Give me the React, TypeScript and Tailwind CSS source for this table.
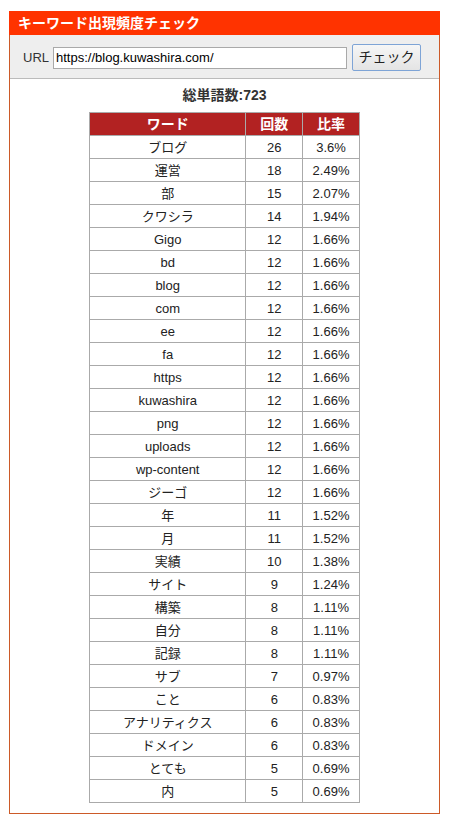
import React from "react";

const rows: [string, number, string][] = [
  ["ブログ", 26, "3.6%"],
  ["運営", 18, "2.49%"],
  ["部", 15, "2.07%"],
  ["クワシラ", 14, "1.94%"],
  ["Gigo", 12, "1.66%"],
  ["bd", 12, "1.66%"],
  ["blog", 12, "1.66%"],
  ["com", 12, "1.66%"],
  ["ee", 12, "1.66%"],
  ["fa", 12, "1.66%"],
  ["https", 12, "1.66%"],
  ["kuwashira", 12, "1.66%"],
  ["png", 12, "1.66%"],
  ["uploads", 12, "1.66%"],
  ["wp-content", 12, "1.66%"],
  ["ジーゴ", 12, "1.66%"],
  ["年", 11, "1.52%"],
  ["月", 11, "1.52%"],
  ["実績", 10, "1.38%"],
  ["サイト", 9, "1.24%"],
  ["構築", 8, "1.11%"],
  ["自分", 8, "1.11%"],
  ["記録", 8, "1.11%"],
  ["サブ", 7, "0.97%"],
  ["こと", 6, "0.83%"],
  ["アナリティクス", 6, "0.83%"],
  ["ドメイン", 6, "0.83%"],
  ["とても", 5, "0.69%"],
  ["内", 5, "0.69%"],
];

export default function App() {
  return (
    <div
      className="w-[451px] h-[829px] bg-white pl-[9px] pt-[11px]"
      style={{ fontFamily: '"Liberation Sans", "Noto Sans CJK JP", sans-serif' }}
    >
      <div className="w-[431px] h-[803px] border border-[#cc5a28] border-t-0 flex flex-col">
        <div className="h-[24px] bg-[#ff3300] text-white font-bold text-[14px] leading-[24px] pl-[9px] -mx-px">
          キーワード出現頻度チェック
        </div>
        <div className="h-[44px] bg-[#eeeeee] border-b border-[#bbbbbb] flex items-center pl-[13px] pt-[2px]">
          <span className="text-[13px] text-[#333] mr-[4px]">URL</span>
          <div className="w-[294px] h-[22px] border border-[#a9a9a9] bg-white text-[13px] leading-[20px] pl-[2px] text-black">
            https://blog.kuwashira.com/
          </div>
          <div className="ml-[5px] w-[69px] h-[27px] border border-[#7ea4d6] rounded-[2px] bg-gradient-to-b from-[#f6f6f6] to-[#e4e4e4] text-[14px] text-[#222] flex items-center justify-center">
            チェック
          </div>
        </div>
        <div className="flex flex-col items-center pt-[7px]">
          <div className="text-[14px] font-bold text-[#333] leading-[18px] h-[26px]">総単語数:723</div>
          <table className="border-collapse w-[271px] text-[13px] text-[#222]">
            <thead>
              <tr className="h-[23px] bg-[#b22222] text-white text-[14px]">
                <th className="border border-[#aaaaaa] w-[157px] font-bold">ワード</th>
                <th className="border border-[#aaaaaa] w-[57px] font-bold">回数</th>
                <th className="border border-[#aaaaaa] w-[57px] font-bold">比率</th>
              </tr>
            </thead>
            <tbody>
              {rows.map(([w, c, r]) => (
                <tr key={w} className="h-[23px]">
                  <td className="border border-[#aaaaaa] text-center p-0 leading-[21px]">{w}</td>
                  <td className="border border-[#aaaaaa] text-center p-0 leading-[21px]">{c}</td>
                  <td className="border border-[#aaaaaa] text-center p-0 leading-[21px]">{r}</td>
                </tr>
              ))}
            </tbody>
          </table>
        </div>
      </div>
    </div>
  );
}
